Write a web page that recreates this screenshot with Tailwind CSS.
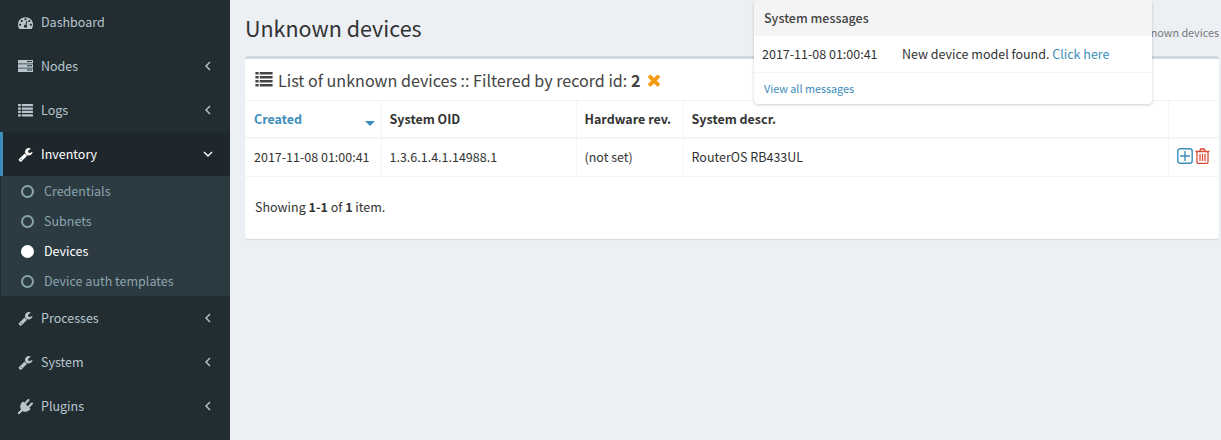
<!DOCTYPE html>
<html lang="en">
<head>
    <meta charset="UTF-8">
    <title>Unknown devices</title>
    <script src="https://cdn.jsdelivr.net/npm/@tailwindcss/browser@4"></script>
</head>
<body class="font-['Noto_Sans_CJK_SC','Noto_Sans',sans-serif] text-[12.5px] leading-[20px] text-[#333]">

    <svg class="hidden">
        <symbol id="wrench" viewBox="0 0 1792 1792"><path fill="currentColor" d="M448 1472q0-26-19-45t-45-19-45 19-19 45 19 45 45 19 45-19 19-45zm644-420l-682 682q-37 37-90 37-52 0-91-37l-106-108q-38-36-38-90 0-53 38-91l681-681q39 98 114.5 173.5t173.5 114.5zm634-435q0 39-23 106-47 134-164.5 217.5t-258.5 83.5q-185 0-316.5-131.5t-131.5-316.5 131.5-316.5 316.5-131.5q58 0 121.5 16.5t107.5 46.5q16 11 16 28t-16 28l-293 169v224l193 107q5-3 79-48.5t135.5-81 70.5-35.5q15 0 23.5 10t8.5 25z"/></symbol>
        <symbol id="list" viewBox="0 0 16 14"><path fill="currentColor" d="M0 0h3v2.4H0zM4 0h12v2.4H4zM0 3.7h3v2.4H0zM4 3.7h12v2.4H4zM0 7.4h3v2.4H0zM4 7.4h12v2.4H4zM0 11.1h3v2.4H0zM4 11.1h12v2.4H4z"/></symbol>
        <symbol id="left" viewBox="0 0 6 10"><path fill="none" stroke="currentColor" stroke-width="1.4" d="M5 1L1 5l4 4"/></symbol>
    </svg>

    <div class="flex h-[440px] w-[1221px] overflow-hidden relative bg-[#ecf0f5]">

        <!-- Sidebar -->
        <aside class="w-[230px] shrink-0 bg-[#222d32] text-[#b8c7ce]">
            <a class="flex items-center h-[44px] pl-[18px] pr-[19px]">
                <svg class="w-[15px] h-[15px] mr-[8px]" viewBox="0 0 1792 1792"><path fill="currentColor" d="M384 1152q0-53-37.5-90.5t-90.5-37.5-90.5 37.5-37.5 90.5 37.5 90.5 90.5 37.5 90.5-37.5 37.5-90.5zm192-448q0-53-37.5-90.5t-90.5-37.5-90.5 37.5-37.5 90.5 37.5 90.5 90.5 37.5 90.5-37.5 37.5-90.5zm428 481l101-382q6-26-7.5-48.5t-38.5-29.5-48 6.5-30 39.5l-101 382q-60 5-107 43.5t-63 98.5q-20 77 20 146t117 89 146-20 89-117q16-60-6-117t-72-91zm660-33q0-53-37.5-90.5t-90.5-37.5-90.5 37.5-37.5 90.5 37.5 90.5 90.5 37.5 90.5-37.5 37.5-90.5zm-640-640q0-53-37.5-90.5t-90.5-37.5-90.5 37.5-37.5 90.5 37.5 90.5 90.5 37.5 90.5-37.5 37.5-90.5zm448 192q0-53-37.5-90.5t-90.5-37.5-90.5 37.5-37.5 90.5 37.5 90.5 90.5 37.5 90.5-37.5 37.5-90.5zm320 448q0 261-141 483-19 29-54 29h-1402q-35 0-54-29-141-221-141-483 0-182 71-348t191-286 286-191 348-71 348 71 286 191 191 286 71 348z"/></svg>
                <span>Dashboard</span>
            </a>
            <a class="flex items-center h-[44px] pl-[18px] pr-[19px]">
                <svg class="w-[15px] h-[12px] mr-[8px]" viewBox="0 0 15 12"><path fill="currentColor" d="M0 0h15v3.4H0zM0 4.3h15v3.4H0zM0 8.6h15V12H0z"/><path fill="#222d32" d="M9 1h5v1H9zM9 5.3h5v1H9zM9 9.6h5v1H9z"/></svg>
                <span>Nodes</span>
                <svg class="w-[6px] h-[10px] ml-auto"><use href="#left"/></svg>
            </a>
            <a class="flex items-center h-[44px] pl-[18px] pr-[19px]">
                <svg class="w-[15px] h-[13px] mr-[8px]"><use href="#list"/></svg>
                <span>Logs</span>
                <svg class="w-[6px] h-[10px] ml-auto"><use href="#left"/></svg>
            </a>
            <a class="flex items-center h-[44px] pl-[15px] pr-[17px] border-l-[3px] border-[#3c8dbc] bg-[#1e282c] text-white">
                <svg class="w-[15px] h-[15px] mr-[8px]"><use href="#wrench"/></svg>
                <span>Inventory</span>
                <svg class="w-[10px] h-[6px] ml-auto" viewBox="0 0 10 6"><path fill="none" stroke="currentColor" stroke-width="1.4" d="M1 1l4 4 4-4"/></svg>
            </a>
            <ul class="ml-[1px] bg-[#2c3b41] text-[#8aa4af]">
                <li class="flex items-center h-[30px] pl-[20px]">
                    <span class="w-[13px] h-[13px] rounded-full border-2 border-[#8aa4af] mr-[10px]"></span>Credentials
                </li>
                <li class="flex items-center h-[30px] pl-[20px]">
                    <span class="w-[13px] h-[13px] rounded-full border-2 border-[#8aa4af] mr-[10px]"></span>Subnets
                </li>
                <li class="flex items-center h-[30px] pl-[20px] text-white">
                    <span class="w-[13px] h-[13px] rounded-full bg-white mr-[10px]"></span>Devices
                </li>
                <li class="flex items-center h-[30px] pl-[20px]">
                    <span class="w-[13px] h-[13px] rounded-full border-2 border-[#8aa4af] mr-[10px]"></span>Device auth templates
                </li>
            </ul>
            <a class="flex items-center h-[44px] pl-[18px] pr-[19px]">
                <svg class="w-[15px] h-[15px] mr-[8px]"><use href="#wrench"/></svg>
                <span>Processes</span>
                <svg class="w-[6px] h-[10px] ml-auto"><use href="#left"/></svg>
            </a>
            <a class="flex items-center h-[44px] pl-[18px] pr-[19px]">
                <svg class="w-[15px] h-[15px] mr-[8px]"><use href="#wrench"/></svg>
                <span>System</span>
                <svg class="w-[6px] h-[10px] ml-auto"><use href="#left"/></svg>
            </a>
            <a class="flex items-center h-[44px] pl-[18px] pr-[19px]">
                <svg class="w-[15px] h-[15px] mr-[8px]" viewBox="0 0 1792 1792"><path fill="currentColor" d="M1755 453q37 38 37 90.5t-37 90.5l-401 400 150 150-160 160q-163 163-389.5 186.5t-411.5-100.5l-362 362h-181v-181l362-362q-124-185-100.5-411.5t186.5-389.5l160-160 150 150 400-401q38-37 91-37t90 37 37 90.5-37 90.5l-400 401 234 234 401-400q38-37 91-37t90 37z"/></svg>
                <span>Plugins</span>
                <svg class="w-[6px] h-[10px] ml-auto"><use href="#left"/></svg>
            </a>
        </aside>

        <!-- Main -->
        <main class="flex-1 pl-[15px] pr-[2px]">
            <div class="flex items-end justify-between h-[56px] pb-[15px]">
                <h1 class="text-[21.5px] leading-[26px]">Unknown devices</h1>
                <span class="text-[10.8px] leading-[18px] text-[#777]">Home &gt; Inventory &gt; Unknown devices</span>
            </div>

            <section class="bg-white border-t-[3px] border-[#d2d6de] rounded-[3px] shadow-[0_1px_1px_rgba(0,0,0,0.1)] h-[183px]">
                <div class="flex items-center h-[41px] pl-[10px] text-[16.1px] leading-[20px] text-[#444]">
                    <svg class="w-[18px] h-[15px] mr-[5px]"><use href="#list"/></svg>
                    <span>List of unknown devices :: Filtered by record id: <b>2</b></span>
                    <svg class="w-[18px] h-[18px] ml-[5px] text-[#f39c12]" viewBox="0 0 1792 1792"><path fill="currentColor" d="M1490 1322q0 40-28 68l-136 136q-28 28-68 28t-68-28l-294-294-294 294q-28 28-68 28t-68-28l-136-136q-28-28-28-68t28-68l294-294-294-294q-28-28-28-68t28-68l136-136q28-28 68-28t68 28l294 294 294-294q28-28 68-28t68 28l136 136q28 28 28 68t-28 68l-294 294 294 294q28 28 28 68z"/></svg>
                </div>

                <table class="w-full table-fixed border-collapse">
                    <thead>
                        <tr class="h-[37px] text-left">
                            <th class="w-[136px] pl-[9px] pr-[8px] pt-[1px] border border-l-0 border-b-2 border-[#f4f4f4] text-[#3c8dbc] relative font-bold">
                                Created
                                <span class="absolute right-[6px] top-[20px] border-x-[5px] border-t-[5px] border-x-transparent border-t-[#3c8dbc]"></span>
                            </th>
                            <th class="w-[195px] px-[8px] pt-[1px] border border-b-2 border-[#f4f4f4] font-bold">System OID</th>
                            <th class="w-[107px] px-[8px] pt-[1px] border border-b-2 border-[#f4f4f4] font-bold">Hardware rev.</th>
                            <th class="px-[8px] pt-[1px] border border-b-2 border-[#f4f4f4] font-bold">System descr.</th>
                            <th class="w-[51px] border border-r-0 border-b-2 border-[#f4f4f4]"></th>
                        </tr>
                    </thead>
                    <tbody>
                        <tr class="h-[39px]">
                            <td class="pl-[9px] pr-[8px] border border-l-0 border-[#f4f4f4]">2017-11-08 01:00:41</td>
                            <td class="px-[8px] border border-[#f4f4f4]">1.3.6.1.4.1.14988.1</td>
                            <td class="px-[8px] border border-[#f4f4f4]">(not set)</td>
                            <td class="px-[8px] border border-[#f4f4f4]">RouterOS RB433UL</td>
                            <td class="pl-[8px] border border-r-0 border-[#f4f4f4]">
                                <div class="flex items-center gap-[2px] mb-[2px]">
                                    <svg class="w-[16px] h-[16px] text-[#3c8dbc]" viewBox="0 0 16 16"><rect x="0.8" y="0.8" width="14.4" height="14.4" rx="2.5" fill="none" stroke="currentColor" stroke-width="1.4"/><path stroke="currentColor" stroke-width="1.4" d="M8 3v10M3 8h10"/></svg>
                                    <svg class="w-[15px] h-[16px] text-[#dd4b39]" viewBox="0 0 15 16"><path fill="none" stroke="currentColor" stroke-width="1.3" d="M0.5 3.5h14M2 3.5v10.8a1 1 0 0 0 1 1h9a1 1 0 0 0 1-1V3.5M4.8 3.5L5.6 1h3.8l.8 2.5M5 6v7M7.5 6v7M10 6v7"/></svg>
                                </div>
                            </td>
                        </tr>
                    </tbody>
                </table>

                <div class="pl-[10px] pt-[20px]">Showing <b>1-1</b> of <b>1</b> item.</div>
            </section>
        </main>

        <!-- System messages dropdown -->
        <div class="absolute left-[754px] top-0 w-[398px] h-[104px] bg-white rounded-[4px] overflow-hidden shadow-[0_1px_3px_rgba(0,0,0,0.2)]">
            <div class="h-[36px] flex items-center px-[10px] bg-[#f4f4f4] text-[#444] font-medium">System messages</div>
            <div class="flex items-center h-[37px] pl-[8px] border-b border-[#f4f4f4]">
                <span class="w-[140px]">2017-11-08 01:00:41</span>
                <span>New device model found. <a class="text-[#3c8dbc]">Click here</a></span>
            </div>
            <div class="flex items-center h-[31px] px-[10px] pb-[2px] text-[10.8px] text-[#3c8dbc]">View all messages</div>
        </div>

    </div>

</body>
</html>
